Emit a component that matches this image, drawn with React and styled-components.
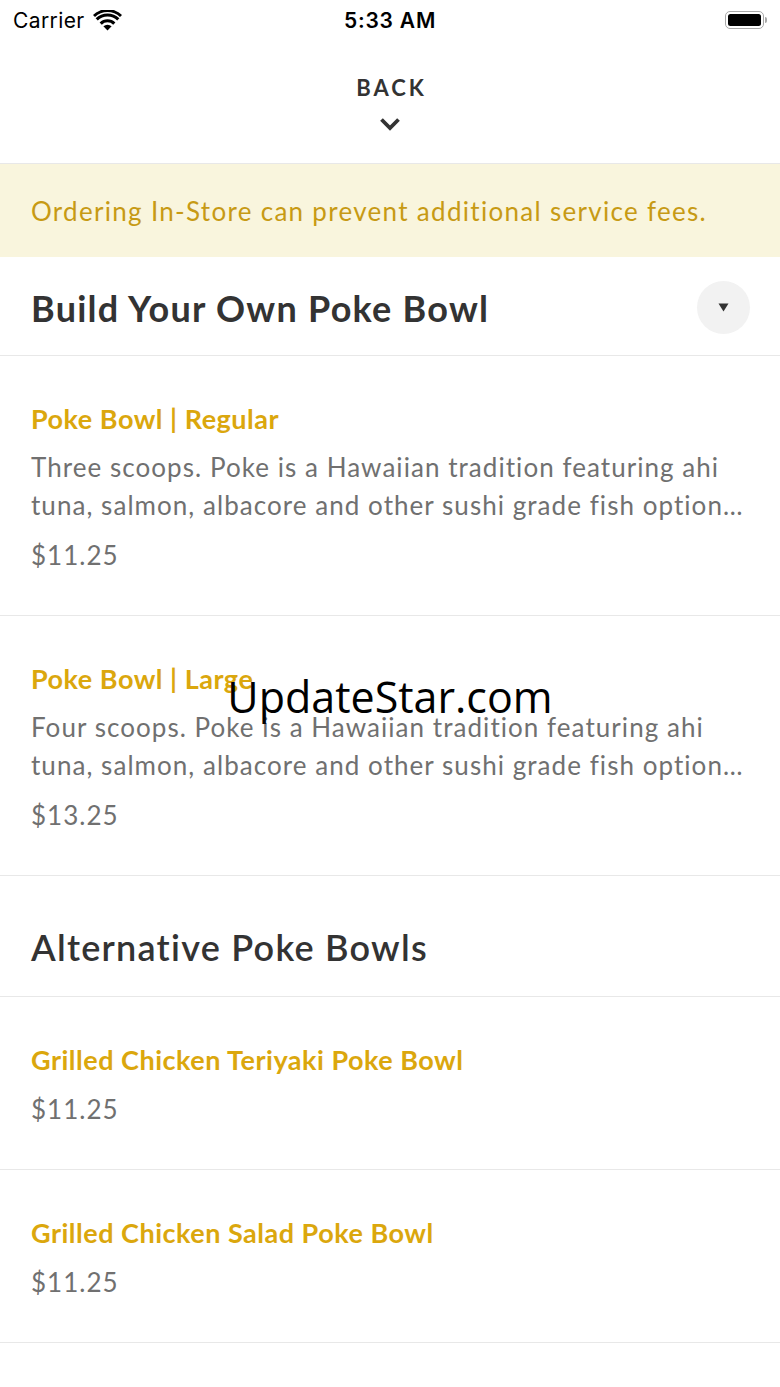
import React from 'react'
import styled, { createGlobalStyle } from 'styled-components'

const Global = createGlobalStyle`
  body {
    margin: 0;
    background: #fff;
    font-family: Lato, "Open Sans", sans-serif;
  }
`

const Page = styled.div`
  position: relative;
  width: 780px;
  min-height: 1387px;
  background: #fff;
`

const StatusBar = styled.div`
  height: 40px;
  display: grid;
  grid-template-columns: 1fr auto 1fr;
  align-items: center;
  padding: 0 13px;
  font-family: Inter, "Liberation Sans", sans-serif;
  font-size: 21px;
  color: #000;
`

const Carrier = styled.div`
  display: flex;
  align-items: center;
  gap: 8px;
  letter-spacing: 0.4px;
`

const Time = styled.div`
  font-weight: 600;
  letter-spacing: 0.8px;
`

const Battery = styled.div`
  justify-self: end;
  display: flex;
  align-items: center;
  gap: 1px;
`

const BatteryBody = styled.div`
  width: 39px;
  height: 18px;
  border: 1.5px solid #a8a8a8;
  border-radius: 5px;
  padding: 2px;
  box-sizing: border-box;
  &::after {
    content: '';
    display: block;
    height: 100%;
    background: #000;
    border-radius: 2.5px;
  }
`

const BatteryNub = styled.div`
  width: 2px;
  height: 6px;
  background: #a8a8a8;
  border-radius: 0 2px 2px 0;
`

const BackBar = styled.div`
  height: 124px;
  display: flex;
  flex-direction: column;
  align-items: center;
  gap: 15px;
  padding-top: 34px;
  box-sizing: border-box;
  border-bottom: 1px solid #e8e8e8;
  color: #333;
`

const BackLabel = styled.div`
  font-size: 22px;
  font-weight: 700;
  letter-spacing: 3px;
  margin-right: -3px;
  line-height: 28px;
`

const Banner = styled.div`
  background: #f9f5dd;
  height: 93px;
  display: flex;
  align-items: center;
  padding: 0 31px;
  font-size: 26px;
  letter-spacing: 1.3px;
  color: #c79a14;
`

const SectionHead = styled.div`
  display: flex;
  align-items: center;
  justify-content: space-between;
  padding: ${p => (p.first ? '24px 30px 21px 31px' : '47px 30px 25px 31px')};
  border-bottom: 1px solid #e8e8e8;
`

const SectionTitle = styled.h2`
  margin: 0;
  font-size: 36px;
  line-height: 48px;
  letter-spacing: 1.25px;
  font-weight: ${p => (p.bold ? 700 : 600)};
  color: #333;
`

const ToggleButton = styled.div`
  width: 53px;
  height: 53px;
  border-radius: 50%;
  background: #f2f2f2;
  display: flex;
  align-items: center;
  justify-content: center;
`

const Item = styled.div`
  padding: 46px 20px 41px 31px;
  border-bottom: 1px solid #e8e8e8;
`

const ItemName = styled.div`
  font-size: 27px;
  line-height: 34px;
  letter-spacing: 0.5px;
  font-weight: 700;
  color: #dba70d;
`

const ItemDesc = styled.div`
  margin-top: 12px;
  font-size: 26px;
  line-height: 38px;
  letter-spacing: 1.05px;
  color: #707070;
`

const Price = styled.div`
  margin-top: ${p => (p.tight ? '13px' : '12px')};
  font-size: 26px;
  line-height: 38px;
  letter-spacing: 1px;
  color: #707070;
`

const Watermark = styled.div`
  position: absolute;
  left: 0;
  right: 0;
  top: 669px;
  text-align: center;
  font-family: "Open Sans", sans-serif;
  font-size: 43px;
  line-height: 56px;
  color: #000;
  pointer-events: none;
`

const Wifi = () => (
  <svg width="29" height="21" viewBox="0 0 29 21">
    <path d="M14.5 20.5 L10.4 16.3 A6 6 0 0 1 18.6 16.3 Z" fill="#000" />
    <path d="M6.6 12.4 A11.2 11.2 0 0 1 22.4 12.4 L20.2 14.7 A8 8 0 0 0 8.8 14.7 Z" fill="#000" />
    <path d="M2.6 8.3 A16.9 16.9 0 0 1 26.4 8.3 L24.2 10.6 A13.6 13.6 0 0 0 4.8 10.6 Z" fill="#000" />
    <path d="M0 5 A20.8 20.8 0 0 1 29 5 L27 7.1 A17.9 17.9 0 0 0 2 7.1 Z" fill="#000" />
  </svg>
)

const Chevron = () => (
  <svg width="22" height="14" viewBox="0 0 22 14">
    <path d="M2.5 2.5 L11 11 L19.5 2.5" fill="none" stroke="#333" strokeWidth="3.8" />
  </svg>
)

const Caret = () => (
  <svg width="11" height="9" viewBox="0 0 11 9">
    <path d="M0.5 0.5 H10.5 L5.5 8.5 Z" fill="#333" />
  </svg>
)

// descriptions as the list shows them, already cut to two lines
const shortDesc = 'Poke is a Hawaiian tradition featuring ahi tuna, salmon, albacore and other sushi grade fish option…'

const buildYourOwn = [
  { name: 'Poke Bowl | Regular', desc: 'Three scoops. ' + shortDesc, price: '$11.25' },
  { name: 'Poke Bowl | Large', desc: 'Four scoops. ' + shortDesc, price: '$13.25' },
]

const alternatives = [
  { name: 'Grilled Chicken Teriyaki Poke Bowl', price: '$11.25' },
  { name: 'Grilled Chicken Salad Poke Bowl', price: '$11.25' },
]

function MenuItem({ item }) {
  return (
    <Item>
      <ItemName>{item.name}</ItemName>
      {item.desc && <ItemDesc>{item.desc}</ItemDesc>}
      <Price tight={!item.desc}>{item.price}</Price>
    </Item>
  )
}

export default function App() {
  return (
    <Page>
      <Global />
      <StatusBar>
        <Carrier>
          Carrier <Wifi />
        </Carrier>
        <Time>5:33 AM</Time>
        <Battery>
          <BatteryBody />
          <BatteryNub />
        </Battery>
      </StatusBar>

      <BackBar>
        <BackLabel>BACK</BackLabel>
        <Chevron />
      </BackBar>

      <Banner>Ordering In-Store can prevent additional service fees.</Banner>

      <SectionHead first>
        <SectionTitle bold>Build Your Own Poke Bowl</SectionTitle>
        <ToggleButton>
          <Caret />
        </ToggleButton>
      </SectionHead>
      {buildYourOwn.map(item => (
        <MenuItem key={item.name} item={item} />
      ))}

      <SectionHead>
        <SectionTitle>Alternative Poke Bowls</SectionTitle>
      </SectionHead>
      {alternatives.map(item => (
        <MenuItem key={item.name} item={item} />
      ))}

      <Watermark>UpdateStar.com</Watermark>
    </Page>
  )
}
